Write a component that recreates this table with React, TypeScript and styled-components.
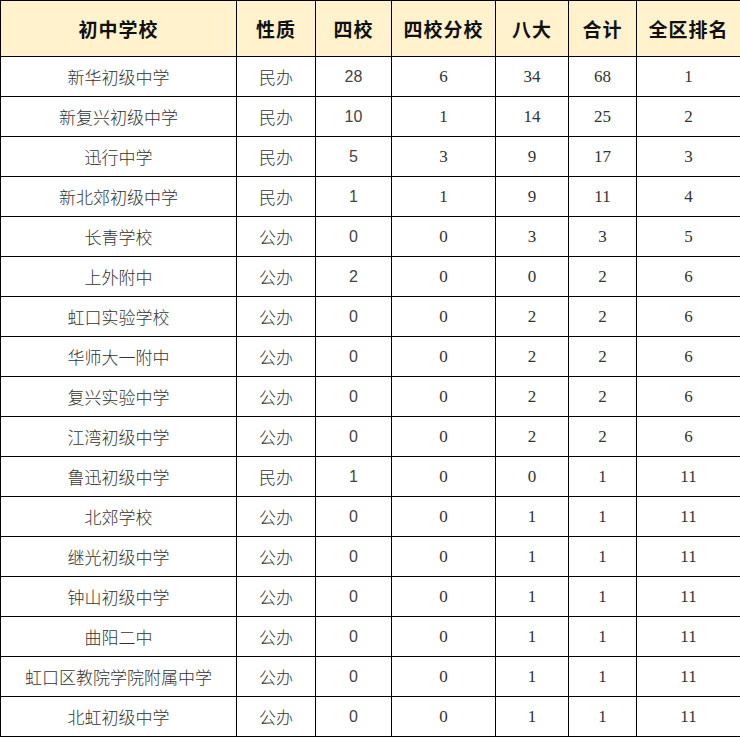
import React from "react";
import styled, { createGlobalStyle } from "styled-components";

const Global = createGlobalStyle`
  html, body { margin: 0; padding: 0; background: #fff; }
  body { font-family: "Noto Sans CJK SC", "Liberation Sans", sans-serif; }
`;

const Table = styled.table`
  border-collapse: collapse;
  table-layout: fixed;
  width: 740px;
`;

const HeadCell = styled.th`
  background: #fff2cc;
  border: 1px solid #000;
  height: 55px;
  padding: 0;
  font-family: "Noto Sans CJK SC", sans-serif;
  font-weight: 700;
  font-size: 19px;
  letter-spacing: 1px;
  color: #111;
  text-align: center;
  vertical-align: middle;
`;

const Cell = styled.td<{ $num?: "sans" | "serif" }>`
  border: 1px solid #000;
  height: 39px;
  padding: 0;
  text-align: center;
  vertical-align: middle;
  color: ${(p) => (p.$num === "sans" ? "#444" : "#333")};
  font-size: ${(p) => (p.$num === "sans" ? "16px" : p.$num ? "17px" : "17px")};
  font-family: ${(p) =>
    p.$num === "sans"
      ? '"Liberation Sans", sans-serif'
      : p.$num === "serif"
      ? '"Liberation Serif", serif'
      : '"Noto Sans CJK SC", sans-serif'};
  font-weight: ${(p) => (p.$num ? 400 : 300)};
`;

const widths = [236, 79, 76, 104, 73, 68, 104];
const headers = ["初中学校", "性质", "四校", "四校分校", "八大", "合计", "全区排名"];

const rows: [string, string, number, number, number, number, number][] = [
  ["新华初级中学", "民办", 28, 6, 34, 68, 1],
  ["新复兴初级中学", "民办", 10, 1, 14, 25, 2],
  ["迅行中学", "民办", 5, 3, 9, 17, 3],
  ["新北郊初级中学", "民办", 1, 1, 9, 11, 4],
  ["长青学校", "公办", 0, 0, 3, 3, 5],
  ["上外附中", "公办", 2, 0, 0, 2, 6],
  ["虹口实验学校", "公办", 0, 0, 2, 2, 6],
  ["华师大一附中", "公办", 0, 0, 2, 2, 6],
  ["复兴实验中学", "公办", 0, 0, 2, 2, 6],
  ["江湾初级中学", "公办", 0, 0, 2, 2, 6],
  ["鲁迅初级中学", "民办", 1, 0, 0, 1, 11],
  ["北郊学校", "公办", 0, 0, 1, 1, 11],
  ["继光初级中学", "公办", 0, 0, 1, 1, 11],
  ["钟山初级中学", "公办", 0, 0, 1, 1, 11],
  ["曲阳二中", "公办", 0, 0, 1, 1, 11],
  ["虹口区教院学院附属中学", "公办", 0, 0, 1, 1, 11],
  ["北虹初级中学", "公办", 0, 0, 1, 1, 11],
];

export default function App() {
  return (
    <>
      <Global />
      <Table>
        <colgroup>
          {widths.map((w, i) => (
            <col key={i} style={{ width: w }} />
          ))}
        </colgroup>
        <thead>
          <tr>
            {headers.map((h) => (
              <HeadCell key={h}>{h}</HeadCell>
            ))}
          </tr>
        </thead>
        <tbody>
          {rows.map((r) => (
            <tr key={r[0]}>
              <Cell>{r[0]}</Cell>
              <Cell>{r[1]}</Cell>
              <Cell $num="sans">{r[2]}</Cell>
              <Cell $num="serif">{r[3]}</Cell>
              <Cell $num="serif">{r[4]}</Cell>
              <Cell $num="serif">{r[5]}</Cell>
              <Cell $num="serif">{r[6]}</Cell>
            </tr>
          ))}
        </tbody>
      </Table>
    </>
  );
}
